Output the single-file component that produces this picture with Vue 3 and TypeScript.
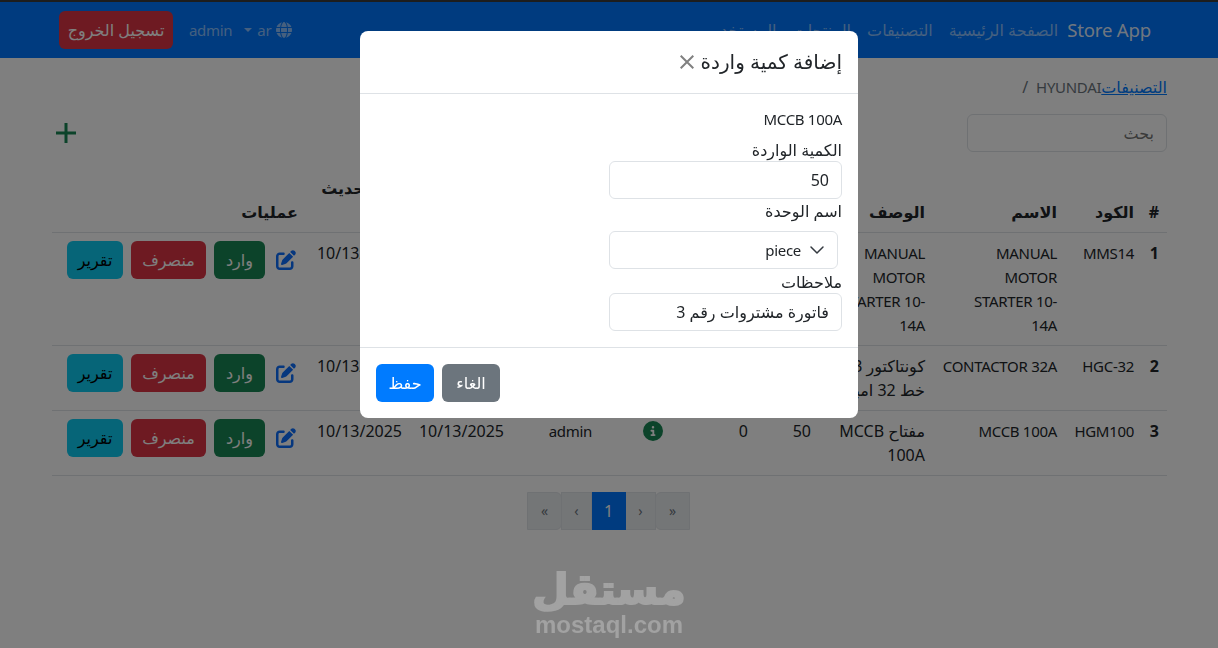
<script setup lang="ts">
import { ref } from 'vue'

type Fila = {
  id: number
  codigo: string
  nombre: string
  descripcion: string
  cantidad: number
  salida: number
}

const links = ['الصفحة الرئيسية', 'التصنيفات', 'المنتجات', 'المستخدمين']

// \u200e keeps the trailing hyphen on the right of its line
const filas: Fila[] = [
  { id: 1, codigo: 'MMS14', nombre: 'MANUAL\nMOTOR\nSTARTER 10-\u200e\n14A', descripcion: 'MANUAL MOTOR STARTER 10-14A', cantidad: 20, salida: 0 },
  { id: 2, codigo: 'HGC-32', nombre: 'CONTACTOR 32A', descripcion: 'كونتاكتور 3 خط 32 امبير', cantidad: 30, salida: 0 },
  { id: 3, codigo: 'HGM100', nombre: 'MCCB 100A', descripcion: 'مفتاح MCCB 100A', cantidad: 50, salida: 0 }
]

const esLatino = (texto: string) => !/[\u0600-\u06ff]/.test(texto)

const busqueda = ref('')
const cantidad = ref('50')
const unidad = ref('piece')
const notas = ref('فاتورة مشتروات رقم 3')

const penPath = 'M471.6 21.7c-21.9-21.9-57.3-21.9-79.2 0L362.3 51.7l97.9 97.9 30.1-30.1c21.9-21.9 21.9-57.3 0-79.2L471.6 21.7zm-299.2 220c-6.1 6.1-10.8 13.6-13.5 21.9l-29.6 88.8c-2.9 8.6-.6 18.1 5.8 24.6s15.9 8.7 24.6 5.8l88.8-29.6c8.2-2.7 15.7-7.4 21.9-13.5L437.7 172.3 339.7 74.3 172.4 241.7zM96 64C43 64 0 107 0 160V416c0 53 43 96 96 96H352c53 0 96-43 96-96V320c0-17.7-14.3-32-32-32s-32 14.3-32 32v96c0 17.7-14.3 32-32 32H96c-17.7 0-32-14.3-32-32V160c0-17.7 14.3-32 32-32h96c17.7 0 32-14.3 32-32s-14.3-32-32-32H96z'
const infoPath = 'M256 512A256 256 0 1 0 256 0a256 256 0 1 0 0 512zM216 336h24V272H216c-13.3 0-24-10.7-24-24s10.7-24 24-24h48c13.3 0 24 10.7 24 24v88h8c13.3 0 24 10.7 24 24s-10.7 24-24 24H216c-13.3 0-24-10.7-24-24s10.7-24 24-24zm40-208a32 32 0 1 1 0 64 32 32 0 1 1 0-64z'
const globePath = 'M352 256c0 22.2-1.2 43.6-3.3 64H163.3c-2.2-20.4-3.3-41.8-3.3-64s1.2-43.6 3.3-64H348.7c2.2 20.4 3.3 41.8 3.3 64zm28.8-64H503.9c5.3 20.5 8.1 41.9 8.1 64s-2.8 43.5-8.1 64H380.8c2.1-20.6 3.2-42 3.2-64s-1.1-43.4-3.2-64zm112.6-32H376.7c-10-63.9-29.8-117.4-55.3-151.6c78.3 20.7 142 77.5 171.9 151.6zm-149.1 0H167.7c6.1-36.4 15.5-68.6 27-94.7c10.5-23.6 22.2-40.7 33.5-51.5C239.4 3.2 248.7 0 256 0s16.6 3.2 27.8 13.8c11.3 10.8 23 27.9 33.5 51.5c11.6 26 20.9 58.2 27 94.7zm-209 0H18.6C48.6 85.9 112.2 29.1 190.6 8.4C165.1 42.6 145.3 96.1 135.3 160zM8.1 192H131.2c-2.1 20.6-3.2 42-3.2 64s1.1 43.4 3.2 64H8.1C2.8 299.5 0 278.1 0 256s2.8-43.5 8.1-64zM194.7 446.6c-11.6-26-20.9-58.2-27-94.6H344.3c-6.1 36.4-15.5 68.6-27 94.6c-10.5 23.6-22.2 40.7-33.5 51.5C272.6 508.8 263.3 512 256 512s-16.6-3.2-27.8-13.8c-11.3-10.8-23-27.9-33.5-51.5zM135.3 352c10 63.9 29.8 117.4 55.3 151.6C112.2 482.9 48.6 426.1 18.6 352H135.3zm358.1 0c-30 74.1-93.6 130.9-171.9 151.6c25.5-34.2 45.2-87.7 55.3-151.6H493.4z'
</script>

<template>
  <div class="app" dir="rtl">
    <nav class="navbar">
      <a class="brand">Store App</a>
      <ul class="links">
        <li v-for="link in links" :key="link">{{ link }}</li>
      </ul>
      <div class="usuario">
        <svg class="globo" viewBox="0 0 512 512"><path :d="globePath" /></svg>
        <span class="latina">ar</span>
        <span class="caret"></span>
        <span class="latina">admin</span>
        <button class="btn salir" type="button">تسجيل الخروج</button>
      </div>
    </nav>

    <main class="contenido">
      <div class="breadcrumb">
        <a class="miga">التصنيفات</a>
        <span class="latina">HYUNDAI</span>
        <span class="barra">/</span>
      </div>

      <div class="herramientas">
        <input v-model="busqueda" class="campo buscar" type="text" placeholder="بحث" />
        <svg class="mas" viewBox="0 0 22 22"><path d="M11 1v20M1 11h20" /></svg>
      </div>

      <table class="tabla">
        <colgroup>
          <col style="width: 25px" />
          <col style="width: 77px" />
          <col style="width: 132px" />
          <col style="width: 114px" />
          <col style="width: 63px" />
          <col style="width: 85px" />
          <col style="width: 71px" />
          <col style="width: 88px" />
          <col style="width: 102px" />
          <col style="width: 104px" />
          <col />
        </colgroup>
        <thead>
          <tr>
            <th>#</th>
            <th>الكود</th>
            <th>الاسم</th>
            <th>الوصف</th>
            <th>وارد</th>
            <th>منصرف</th>
            <th>عرض</th>
            <th>المستخدم</th>
            <th>الإنشاء</th>
            <th>آخر تحديث<br />في</th>
            <th>عمليات</th>
          </tr>
        </thead>
        <tbody>
          <tr v-for="fila in filas" :key="fila.id">
            <th>{{ fila.id }}</th>
            <td class="latina">{{ fila.codigo }}</td>
            <td class="latina nombre">{{ fila.nombre }}</td>
            <td :class="{ latina: esLatino(fila.descripcion) }">{{ fila.descripcion }}</td>
            <td>{{ fila.cantidad }}</td>
            <td>{{ fila.salida }}</td>
            <td><svg class="info" viewBox="0 0 512 512"><path :d="infoPath" /></svg></td>
            <td class="latina">admin</td>
            <td>10/13/2025</td>
            <td>10/13/2025</td>
            <td>
              <div class="acciones">
                <svg class="editar" viewBox="0 0 512 512"><path :d="penPath" /></svg>
                <button class="btn verde" type="button">وارد</button>
                <button class="btn rojo" type="button">منصرف</button>
                <button class="btn cian" type="button">تقرير</button>
              </div>
            </td>
          </tr>
        </tbody>
      </table>

      <div class="paginacion">
        <span class="pagina extremo-a">«</span>
        <span class="pagina flecha">‹</span>
        <span class="pagina activa">1</span>
        <span class="pagina flecha">›</span>
        <span class="pagina extremo-b">»</span>
      </div>
    </main>

    <div class="fondo"></div>

    <section class="modal">
      <header class="modal-cabecera">
        <h2>إضافة كمية واردة</h2>
        <svg class="cerrar" viewBox="0 0 14 14"><path d="M.7.7l12.6 12.6M13.3.7L.7 13.3" /></svg>
      </header>
      <div class="modal-cuerpo">
        <p class="producto latina">MCCB 100A</p>
        <label class="etiqueta">الكمية الواردة</label>
        <input v-model="cantidad" class="campo" type="text" />
        <label class="etiqueta">اسم الوحدة</label>
        <div class="selector">
          <select v-model="unidad" class="campo lista">
            <option value="piece">piece</option>
            <option value="meter">meter</option>
          </select>
          <svg class="chevron" viewBox="0 0 16 16"><path d="M2 5l6 6 6-6" /></svg>
        </div>
        <label class="etiqueta">ملاحظات</label>
        <input v-model="notas" class="campo" type="text" />
      </div>
      <footer class="modal-pie">
        <button class="btn gris" type="button">الغاء</button>
        <button class="btn azul" type="button">حفظ</button>
      </footer>
    </section>

    <div class="marca">
      <span class="marca-ar">مستقل</span>
      <span class="marca-en">mostaql.com</span>
    </div>
  </div>
</template>

<style>
html,
body {
  margin: 0;
  background: #fff;
  overflow: hidden;
}
</style>

<style scoped>
.app {
  height: 648px;
  font-family: 'Noto Sans', 'DejaVu Sans', sans-serif;
  font-size: 16px;
  line-height: 24px;
  color: #212529;
}

.latina {
  font-size: 15px;
  letter-spacing: -0.3px;
}

.navbar {
  height: 56px;
  border-top: 2px solid #3a3a3a;
  background: #0076ff;
  display: flex;
  align-items: center;
  padding: 0 67px 0 43px;
}

.brand {
  font-size: 18.6px;
  letter-spacing: -0.2px;
  color: rgba(255, 255, 255, 0.9);
  margin-left: 9px;
}

.links {
  display: flex;
  gap: 16px;
  margin: 0;
  padding: 0;
  list-style: none;
  color: rgba(255, 255, 255, 0.55);
}

.usuario {
  margin-right: auto;
  display: flex;
  align-items: center;
  color: rgba(255, 255, 255, 0.55);
}

.globo {
  width: 16px;
  height: 16px;
  fill: rgba(255, 255, 255, 0.55);
  margin-left: 5px;
}

.caret {
  width: 0;
  height: 0;
  border-top: 4px solid rgba(255, 255, 255, 0.55);
  border-left: 4px solid transparent;
  border-right: 4px solid transparent;
  margin: 0 5px 0 12px;
}

.btn {
  height: 38px;
  border: 1px solid transparent;
  border-radius: 6px;
  padding: 0;
  font: inherit;
  color: #fff;
  cursor: pointer;
}

.salir {
  width: 114px;
  background: #dc3545;
  margin: 0 16px;
}

.contenido {
  width: 1115px;
  margin-right: 51px;
  padding-top: 17px;
}

.breadcrumb {
  display: flex;
  height: 24px;
  color: #6c757d;
}

.miga {
  color: #007bff;
  text-decoration: underline;
}

.barra {
  margin-right: 8px;
}

.herramientas {
  display: flex;
  align-items: center;
  justify-content: space-between;
  margin-top: 15px;
  margin-bottom: 16px;
}

.campo {
  box-sizing: border-box;
  display: block;
  width: 233px;
  height: 38px;
  padding: 0 12px;
  font: inherit;
  color: #212529;
  background: #fff;
  border: 1px solid #dee2e6;
  border-radius: 6px;
  outline: none;
}

.buscar {
  width: 200px;
}

.mas {
  width: 22px;
  height: 22px;
  margin-left: 3px;
  fill: none;
  stroke: #198754;
  stroke-width: 3;
}

.tabla {
  width: 100%;
  table-layout: fixed;
  border-collapse: collapse;
}

.tabla th,
.tabla td {
  padding: 8px;
  text-align: right;
  border-bottom: 1px solid #dee2e6;
  vertical-align: top;
}

.tabla thead th {
  vertical-align: bottom;
}

.nombre {
  white-space: pre-line;
}

.info {
  width: 20px;
  height: 20px;
  display: block;
  margin-top: 2px;
  fill: #198754;
}

.acciones {
  display: flex;
  align-items: flex-start;
  gap: 8px;
}

.editar {
  width: 20px;
  height: 20px;
  margin: 9px 2px 0 3px;
  fill: #0d6efd;
}

.verde {
  width: 51px;
  background: #198754;
}

.rojo {
  width: 75px;
  background: #dc3545;
}

.cian {
  width: 56px;
  background: #0dcaf0;
  color: #000;
}

.paginacion {
  display: flex;
  justify-content: center;
  margin-top: 16px;
  padding-right: 3px;
}

.pagina {
  box-sizing: border-box;
  height: 38px;
  display: flex;
  align-items: center;
  justify-content: center;
  background: #e9ecef;
  border: 1px solid #dee2e6;
  color: #6c757d;
  font-size: 14px;
  margin-right: -1px;
}

.flecha {
  width: 31px;
}

.extremo-a,
.extremo-b {
  width: 35px;
}

.extremo-a {
  border-radius: 6px 0 0 6px;
}

.extremo-b {
  border-radius: 0 6px 6px 0;
}

.activa {
  width: 35px;
  background: #0076ff;
  border-color: #0076ff;
  color: #fff;
  font-size: 16px;
}

.fondo {
  position: fixed;
  inset: 0;
  background: rgba(0, 0, 0, 0.5);
}

.modal {
  position: fixed;
  top: 31px;
  left: 360px;
  width: 498px;
  background: #fff;
  border-radius: 8px;
  overflow: hidden;
}

.modal-cabecera {
  height: 62px;
  border-bottom: 1px solid #dee2e6;
  display: flex;
  align-items: center;
  padding: 0 16px;
}

.modal-cabecera h2 {
  margin: 0;
  width: 147px;
  font-size: 20px;
  font-weight: 400;
  line-height: 30px;
}

.cerrar {
  width: 14px;
  height: 14px;
  margin-right: 1px;
  fill: none;
  stroke: #808080;
  stroke-width: 2;
}

.modal-cuerpo {
  padding: 13px 16px 16px;
  height: 224px;
}

.producto {
  margin: 0;
  height: 31px;
}

.etiqueta {
  display: block;
  height: 23px;
}

.selector {
  position: relative;
  width: 229px;
  margin: 9px 4px 1px 0;
}

.lista {
  width: 229px;
  appearance: none;
  padding-right: 36px;
  padding-left: 12px;
  font-size: 15px;
  letter-spacing: -0.3px;
}

.chevron {
  position: absolute;
  left: 200px;
  top: 11px;
  width: 16px;
  height: 16px;
  fill: none;
  stroke: #343a40;
  stroke-width: 1.5;
  stroke-linecap: round;
  stroke-linejoin: round;
}

.modal-pie {
  border-top: 1px solid #dee2e6;
  height: 54px;
  display: flex;
  justify-content: flex-end;
  gap: 8px;
  padding: 16px 16px 0;
}

.gris {
  width: 58px;
  background: #6c757d;
}

.azul {
  width: 58px;
  background: #007bff;
}

.marca {
  position: fixed;
  left: 535px;
  top: 563px;
  width: 148px;
  display: flex;
  flex-direction: column;
  align-items: center;
  color: #a2a2a2;
  font-weight: 700;
  pointer-events: none;
}

.marca-ar {
  font-size: 42px;
  line-height: 49px;
  -webkit-text-stroke: 2px #a2a2a2;
}

.marca-en {
  font-family: 'Liberation Sans', Arial, sans-serif;
  font-size: 24px;
  line-height: 26px;
}
</style>
